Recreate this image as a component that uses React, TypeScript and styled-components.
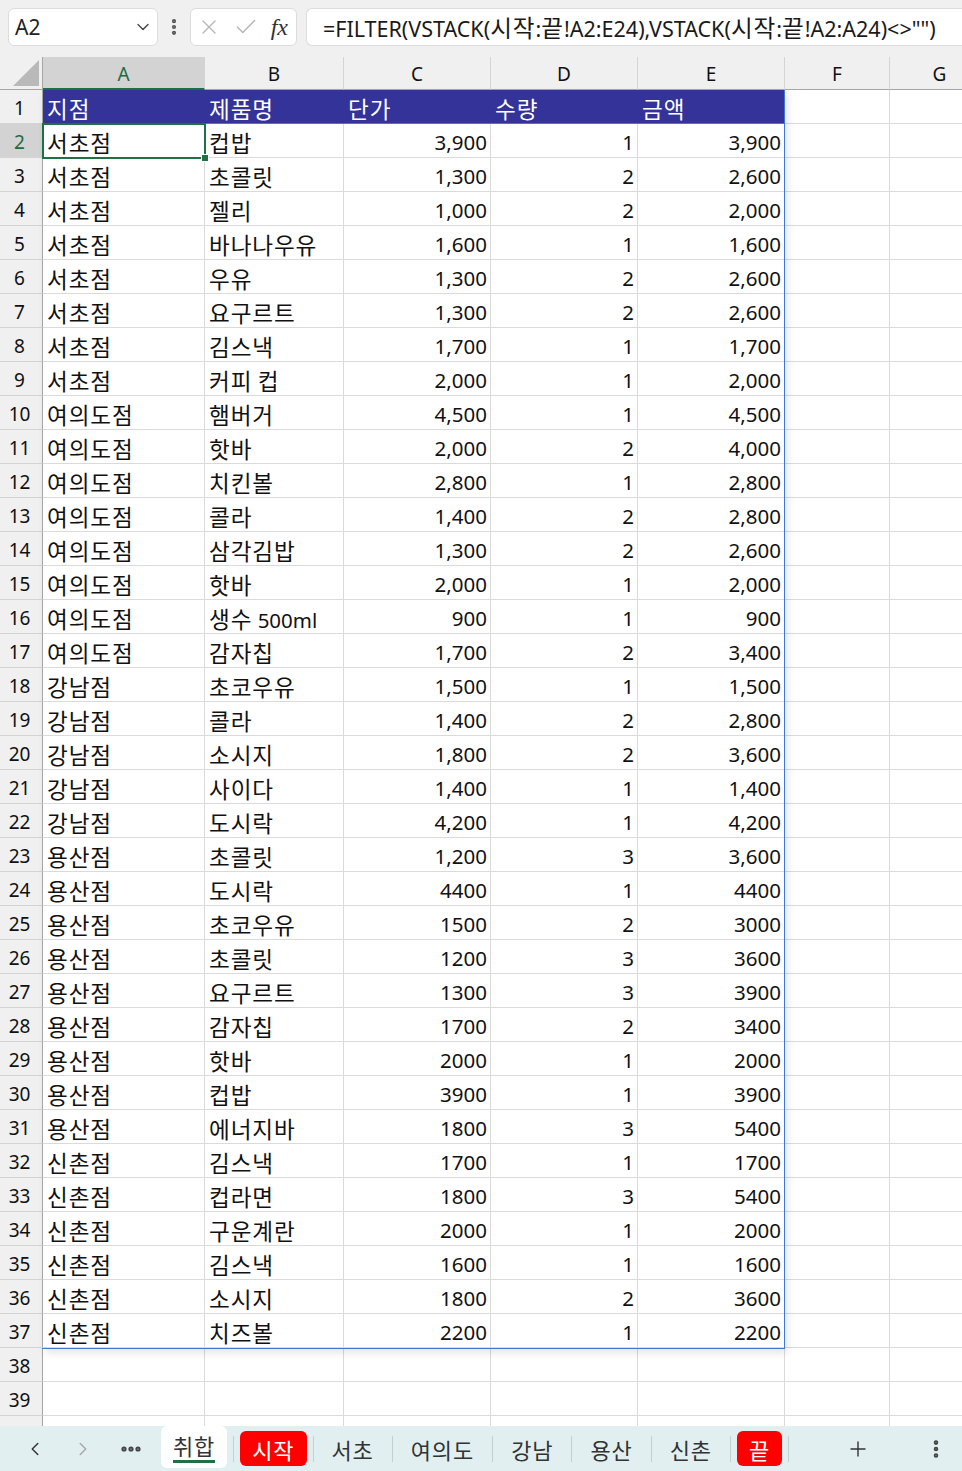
import styled, { createGlobalStyle } from "styled-components";
import {
  ChevronDown,
  X,
  Check,
  ChevronLeft,
  ChevronRight,
  Ellipsis,
  EllipsisVertical,
  Plus,
} from "lucide-react";

const GlobalStyle = createGlobalStyle`
  html, body { margin: 0; padding: 0; }
  body {
    font-family: "Noto Sans", "Noto Sans CJK KR", sans-serif;
    background: #f0f0f0;
    overflow: hidden;
  }
`;

// column widths: row header, A..G (G runs past the window edge)
const COLS = "43px 162px 139px 147px 147px 147px 105px 100px";
const LETTERS = ["A", "B", "C", "D", "E", "F", "G"];

type Rec = [string, string, string, string, string];

const data: Rec[] = [
  ["서초점", "컵밥", "3,900", "1", "3,900"],
  ["서초점", "초콜릿", "1,300", "2", "2,600"],
  ["서초점", "젤리", "1,000", "2", "2,000"],
  ["서초점", "바나나우유", "1,600", "1", "1,600"],
  ["서초점", "우유", "1,300", "2", "2,600"],
  ["서초점", "요구르트", "1,300", "2", "2,600"],
  ["서초점", "김스낵", "1,700", "1", "1,700"],
  ["서초점", "커피 컵", "2,000", "1", "2,000"],
  ["여의도점", "햄버거", "4,500", "1", "4,500"],
  ["여의도점", "핫바", "2,000", "2", "4,000"],
  ["여의도점", "치킨볼", "2,800", "1", "2,800"],
  ["여의도점", "콜라", "1,400", "2", "2,800"],
  ["여의도점", "삼각김밥", "1,300", "2", "2,600"],
  ["여의도점", "핫바", "2,000", "1", "2,000"],
  ["여의도점", "생수 500ml", "900", "1", "900"],
  ["여의도점", "감자칩", "1,700", "2", "3,400"],
  ["강남점", "초코우유", "1,500", "1", "1,500"],
  ["강남점", "콜라", "1,400", "2", "2,800"],
  ["강남점", "소시지", "1,800", "2", "3,600"],
  ["강남점", "사이다", "1,400", "1", "1,400"],
  ["강남점", "도시락", "4,200", "1", "4,200"],
  ["용산점", "초콜릿", "1,200", "3", "3,600"],
  ["용산점", "도시락", "4400", "1", "4400"],
  ["용산점", "초코우유", "1500", "2", "3000"],
  ["용산점", "초콜릿", "1200", "3", "3600"],
  ["용산점", "요구르트", "1300", "3", "3900"],
  ["용산점", "감자칩", "1700", "2", "3400"],
  ["용산점", "핫바", "2000", "1", "2000"],
  ["용산점", "컵밥", "3900", "1", "3900"],
  ["용산점", "에너지바", "1800", "3", "5400"],
  ["신촌점", "김스낵", "1700", "1", "1700"],
  ["신촌점", "컵라면", "1800", "3", "5400"],
  ["신촌점", "구운계란", "2000", "1", "2000"],
  ["신촌점", "김스낵", "1600", "1", "1600"],
  ["신촌점", "소시지", "1800", "2", "3600"],
  ["신촌점", "치즈볼", "2200", "1", "2200"],
];

const headers = ["지점", "제품명", "단가", "수량", "금액"];

const sheets = [
  { name: "취합", kind: "active" },
  { name: "시작", kind: "red" },
  { name: "서초", kind: "plain" },
  { name: "여의도", kind: "plain" },
  { name: "강남", kind: "plain" },
  { name: "용산", kind: "plain" },
  { name: "신촌", kind: "plain" },
  { name: "끝", kind: "red" },
];

// hangul runs are drawn a bit wider, like Malgun Gothic
const HAN = /([\uAC00-\uD7A3\u3131-\u318E]+)/;
const kr = (text: string) => (
  <Txt>
    {text
      .split(HAN)
      .filter(Boolean)
      .map((part, i) => (HAN.test(part) ? <Han key={i}>{part}</Han> : part))}
  </Txt>
);

const App = () => {
  return (
    <>
      <GlobalStyle />
      <Page>
        <TopBar>
          <NameBox>
            <span>A2</span>
            <ChevronDown size={20} strokeWidth={1.6} color="#444" />
          </NameBox>
          <DotsSlot>
            <EllipsisVertical size={20} strokeWidth={3} color="#555" />
          </DotsSlot>
          <FxBox>
            <X size={24} strokeWidth={1.3} color="#b4b4b4" />
            <Check size={26} strokeWidth={1.3} color="#b4b4b4" />
            <FxLabel>fx</FxLabel>
          </FxBox>
          <FormulaBox>
            {kr('=FILTER(VSTACK(시작:끝!A2:E24),VSTACK(시작:끝!A2:A24)<>"")')}
          </FormulaBox>
        </TopBar>

        <Sheet>
          <ColHeadRow>
            <Corner>
              <svg width="30" height="30" viewBox="0 0 30 30">
                <polygon points="28,2 28,28 2,28" fill="#b9b9b9" />
              </svg>
            </Corner>
            {LETTERS.map((l, i) => (
              <ColHead key={l} $sel={i === 0}>
                {l}
              </ColHead>
            ))}
          </ColHeadRow>

          <Body>
            <Row>
              <RowHead>1</RowHead>
              {headers.map((h) => (
                <HeadCell key={h}>{kr(h)}</HeadCell>
              ))}
              <Cell />
              <Cell />
            </Row>
            {data.map((r, i) => (
              <Row key={i}>
                <RowHead $sel={i === 0}>{i + 2}</RowHead>
                <Cell>{kr(r[0])}</Cell>
                <Cell>{kr(r[1])}</Cell>
                <Cell $num>{r[2]}</Cell>
                <Cell $num>{r[3]}</Cell>
                <Cell $num>{r[4]}</Cell>
                <Cell />
                <Cell />
              </Row>
            ))}
            {[38, 39, 0].map((n) => (
              <Row key={n}>
                <RowHead>{n > 0 ? n : ""}</RowHead>
                {LETTERS.map((l) => (
                  <Cell key={l} />
                ))}
              </Row>
            ))}
            <SpillFrame />
            <Selection>
              <Handle />
            </Selection>
          </Body>
        </Sheet>

        <TabBar>
          <Nav>
            <NavBtn>
              <ChevronLeft size={22} strokeWidth={1.6} color="#333" />
            </NavBtn>
            <NavBtn>
              <ChevronRight size={22} strokeWidth={1.6} color="#a8a8a8" />
            </NavBtn>
            <NavBtn>
              <Ellipsis size={24} strokeWidth={3.2} color="#444" />
            </NavBtn>
          </Nav>
          {sheets.map((s) => (
            <TabGroup key={s.name}>
              <Tab $kind={s.kind}>
                {kr(s.name)}
                {s.kind === "active" && <Underline />}
              </Tab>
              <Sep />
            </TabGroup>
          ))}
          <AddBtn>
            <Plus size={24} strokeWidth={1.4} color="#333" />
          </AddBtn>
          <MoreBtn>
            <EllipsisVertical size={22} strokeWidth={3} color="#444" />
          </MoreBtn>
        </TabBar>
      </Page>
    </>
  );
};

const Page = styled.div`
  width: 100vw;
  height: 100vh;
  display: flex;
  flex-direction: column;
  overflow: hidden;
`;

const Txt = styled.span`
  white-space: pre;
`;

const Han = styled.span`
  font-family: "Noto Sans CJK KR", sans-serif;
  font-size: 1.1em;
  letter-spacing: 0.04em;
`;

const TopBar = styled.div`
  height: 57px;
  flex: none;
  box-sizing: border-box;
  padding: 8px 0 0 8px;
  display: flex;
  align-items: flex-start;
  background: #f0f0f0;
`;

const Box = styled.div`
  height: 38px;
  box-sizing: border-box;
  background: #fff;
  border: 1px solid #dcdcdc;
  border-radius: 6px;
  display: flex;
  align-items: center;
`;

const NameBox = styled(Box)`
  width: 150px;
  padding: 0 4px 0 6px;
  justify-content: space-between;
  font-size: 21px;
  color: #222;
`;

const DotsSlot = styled.div`
  width: 32px;
  height: 38px;
  display: flex;
  align-items: center;
  justify-content: center;
`;

const FxBox = styled(Box)`
  width: 107px;
  padding: 0 6px 0 6px;
  justify-content: space-between;
`;

const FxLabel = styled.span`
  font-family: "Liberation Serif", "DejaVu Serif", serif;
  font-style: italic;
  font-size: 24px;
  color: #333;
  padding-right: 2px;
`;

const FormulaBox = styled(Box)`
  flex: 1;
  margin-left: 9px;
  border-right: none;
  border-radius: 6px 0 0 6px;
  padding-left: 16px;
  font-size: 21.5px;
  color: #1a1a1a;
  white-space: nowrap;
  overflow: hidden;
`;

const Sheet = styled.div`
  flex: 1;
  overflow: hidden;
  background: #fff;
  display: flex;
  flex-direction: column;
`;

const ColHeadRow = styled.div`
  display: grid;
  grid-template-columns: ${COLS};
  height: 33px;
  flex: none;
  background: #f0f0f0;
`;

const Corner = styled.div`
  box-sizing: border-box;
  border-right: 1px solid #a6a6a6;
  border-bottom: 1px solid #a6a6a6;
  display: flex;
  align-items: flex-end;
  justify-content: flex-end;
  padding: 0 1px 1px 0;
`;

const ColHead = styled.div<{ $sel?: boolean }>`
  box-sizing: border-box;
  border-right: 1px solid #d4d4d4;
  border-bottom: ${(p) => (p.$sel ? "2px solid #1e7145" : "1px solid #a6a6a6")};
  background: ${(p) => (p.$sel ? "#d3d3d3" : "#f0f0f0")};
  color: ${(p) => (p.$sel ? "#1e6b41" : "#111")};
  display: flex;
  align-items: center;
  justify-content: center;
  font-size: 19px;
  padding-top: 2px;
`;

const Body = styled.div`
  position: relative;
  flex: 1;
`;

const Row = styled.div`
  display: grid;
  grid-template-columns: ${COLS};
  height: 34px;
`;

const RowHead = styled.div<{ $sel?: boolean }>`
  box-sizing: border-box;
  border-right: 1px solid #a6a6a6;
  border-bottom: 1px solid #d4d4d4;
  background: ${(p) => (p.$sel ? "#d3d3d3" : "#f0f0f0")};
  color: ${(p) => (p.$sel ? "#1e6b41" : "#111")};
  display: flex;
  align-items: center;
  justify-content: center;
  font-size: 19px;
  padding: 3px 3px 0 0;
`;

const Cell = styled.div<{ $num?: boolean }>`
  box-sizing: border-box;
  border-right: 1px solid #dadada;
  border-bottom: 1px solid #dadada;
  display: flex;
  align-items: center;
  justify-content: ${(p) => (p.$num ? "flex-end" : "flex-start")};
  padding: ${(p) => (p.$num ? "3px 3px 0 0" : "3px 0 0 4px")};
  font-size: 20.5px;
  color: #111;
  white-space: pre;
  overflow: hidden;
`;

const HeadCell = styled(Cell)`
  background: #333399;
  color: #fff;
  border-right: none;
  border-bottom: 1px solid #3d78d8;
`;

const SpillFrame = styled.div`
  position: absolute;
  left: 42px;
  top: 0;
  width: 743px;
  height: 1259px;
  box-sizing: border-box;
  border-right: 1px solid #3d78d8;
  border-bottom: 1px solid #3d78d8;
  box-shadow: 3px 4px 8px rgba(0, 0, 0, 0.1);
  pointer-events: none;
`;

const Selection = styled.div`
  position: absolute;
  left: 42px;
  top: 33px;
  width: 164px;
  height: 36px;
  box-sizing: border-box;
  border: 2px solid #1e7145;
`;

const Handle = styled.div`
  position: absolute;
  right: -5px;
  bottom: -5px;
  width: 6px;
  height: 6px;
  background: #1e7145;
  border: 1px solid #fff;
`;

const TabBar = styled.div`
  height: 45px;
  flex: none;
  background: #e1eff0;
  display: flex;
  align-items: center;
  font-family: "Noto Sans CJK KR", sans-serif;
`;

const Nav = styled.div`
  width: 161px;
  box-sizing: border-box;
  padding-left: 11px;
  display: flex;
  align-items: center;
`;

const NavBtn = styled.div`
  width: 48px;
  height: 36px;
  display: flex;
  align-items: center;
  justify-content: center;
`;

const TabGroup = styled.div`
  display: flex;
  align-items: center;
`;

const Tab = styled.div<{ $kind: string }>`
  position: relative;
  box-sizing: border-box;
  height: ${(p) => (p.$kind === "active" ? "42px" : "35px")};
  padding: ${(p) => (p.$kind === "active" ? "0 12px 4px" : "0 12px")};
  margin-top: ${(p) => (p.$kind === "active" ? "-3px" : "0")};
  border-radius: 6px;
  display: flex;
  align-items: center;
  font-size: 20px;
  background: ${(p) =>
    p.$kind === "active" ? "#fff" : p.$kind === "red" ? "#ff0000" : "transparent"};
  color: ${(p) => (p.$kind === "red" ? "#fff" : "#333")};
`;

const Underline = styled.div`
  position: absolute;
  left: 12px;
  right: 12px;
  bottom: 5px;
  height: 3px;
  background: #1e7145;
`;

const Sep = styled.div`
  width: 1px;
  height: 26px;
  margin: 0 6px;
  background: #c4cfd0;
`;

const AddBtn = styled.div`
  margin-left: auto;
  margin-right: 26px;
  width: 52px;
  height: 36px;
  display: flex;
  align-items: center;
  justify-content: center;
`;

const MoreBtn = styled.div`
  width: 52px;
  height: 36px;
  display: flex;
  align-items: center;
  justify-content: center;
`;

export default App;
